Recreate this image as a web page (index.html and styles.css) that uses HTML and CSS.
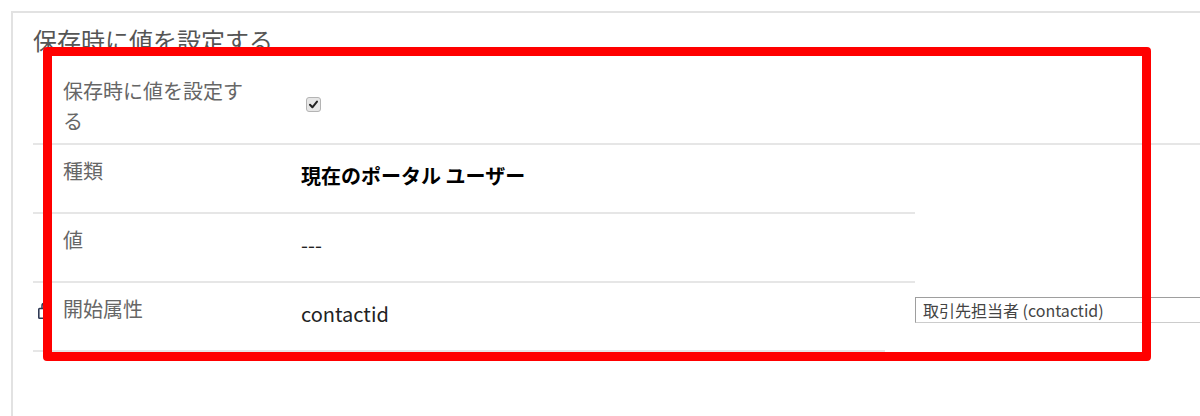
FILE: index.html
```html
<!DOCTYPE html>
<html lang="ja">
<head>
<meta charset="utf-8">
<title>保存時に値を設定する</title>
<link rel="stylesheet" href="styles.css">
</head>
<body>
<div class="page">
  <section class="section">
    <h2 class="title">保存時に値を設定する</h2>
    <div class="row">
      <div class="label">保存時に値を設定する</div>
      <div class="value">
        <span class="check">
          <svg width="15" height="15" viewBox="0 0 15 15"><path d="M4 7.8 L6.4 10.3 L11 4.6" fill="none" stroke="#222" stroke-width="2" stroke-linecap="round" stroke-linejoin="round"/></svg>
        </span>
      </div>
    </div>
    <div class="fields">
      <div class="row">
        <div class="label">種類</div>
        <div class="value strong">現在のポータル ユーザー</div>
      </div>
      <div class="row">
        <div class="label">値</div>
        <div class="value">---</div>
      </div>
      <div class="row row-short">
        <div class="label">
          <svg class="lock" width="13" height="17" viewBox="0 0 13 17"><path d="M4 6.5 V3.8 A2.5 2.5 0 0 1 9 3.8 V6.5" fill="none" stroke="#2f3a55" stroke-width="1.5"/><rect x="0.8" y="6.5" width="11.4" height="9.7" rx="0.8" fill="none" stroke="#2f3a55" stroke-width="1.6"/></svg>開始属性
        </div>
        <div class="value">contactid</div>
      </div>
      <div class="lookup">取引先担当者 (contactid)</div>
    </div>
  </section>
  <div class="highlight"></div>
</div>
</body>
</html>
```

FILE: styles.css
```css
html, body {
  margin: 0;
  padding: 0;
  background: #ffffff;
}

body {
  font-family: "Noto Sans CJK JP", "Noto Sans", sans-serif;
  width: 1200px;
  height: 416px;
  overflow: hidden;
}

.page {
  position: relative;
  box-sizing: border-box;
  width: 1200px;
  height: 416px;
  padding: 11px 0 0 11px;
}

.section {
  box-sizing: border-box;
  height: 405px;
  border-top: 2px solid #e2e2e2;
  border-left: 2px solid #e2e2e2;
  padding-left: 20px;
}

.title {
  margin: 10px 0 8px;
  font-size: 24px;
  line-height: 34px;
  font-weight: normal;
  color: #555555;
}

.row {
  box-sizing: border-box;
  display: grid;
  grid-template-columns: 250px 1fr;
  min-height: 69px;
  border-bottom: 2px solid #e6e6e6;
}

.label {
  padding: 11px 30px 7px 30px;
  font-size: 20px;
  line-height: 30px;
  color: #666666;
  display: flex;
  align-items: center;
  align-self: start;
}

.lock {
  flex: none;
  margin-left: -25px;
  margin-right: 12px;
  margin-top: 2px;
}

.value {
  align-self: center;
  padding-left: 18px;
  padding-bottom: 6px;
  font-size: 20px;
  line-height: 30px;
  color: #222222;
  display: flex;
  align-items: center;
}

.strong {
  font-weight: bold;
  color: #000000;
}

.check {
  box-sizing: border-box;
  display: inline-flex;
  width: 15px;
  height: 15px;
  margin-left: 5px;
  margin-top: 6px;
  background: #e6e6e6;
  border: 1px solid #b4b4b4;
  border-radius: 3px;
  align-items: center;
  justify-content: center;
}

.check svg {
  display: block;
  margin: -1px;
}

.fields {
  display: grid;
  grid-template-columns: 882px 1fr;
}

.fields > .row {
  grid-column: 1;
}

.row-short {
  margin-right: 30px;
}

.lookup {
  grid-column: 2;
  grid-row: 3;
  align-self: start;
  margin-top: 14px;
  box-sizing: border-box;
  width: 320px;
  height: 26px;
  padding: 0 7px;
  border: 1px solid #cccccc;
  border-top-color: #9e9e9e;
  border-left-color: #9e9e9e;
  font-size: 16px;
  line-height: 24px;
  color: #444444;
  white-space: nowrap;
}

.highlight {
  position: absolute;
  left: 43px;
  top: 47px;
  width: 1108px;
  height: 314px;
  box-sizing: border-box;
  border: 9px solid #ff0000;
  border-radius: 4px;
}
```
